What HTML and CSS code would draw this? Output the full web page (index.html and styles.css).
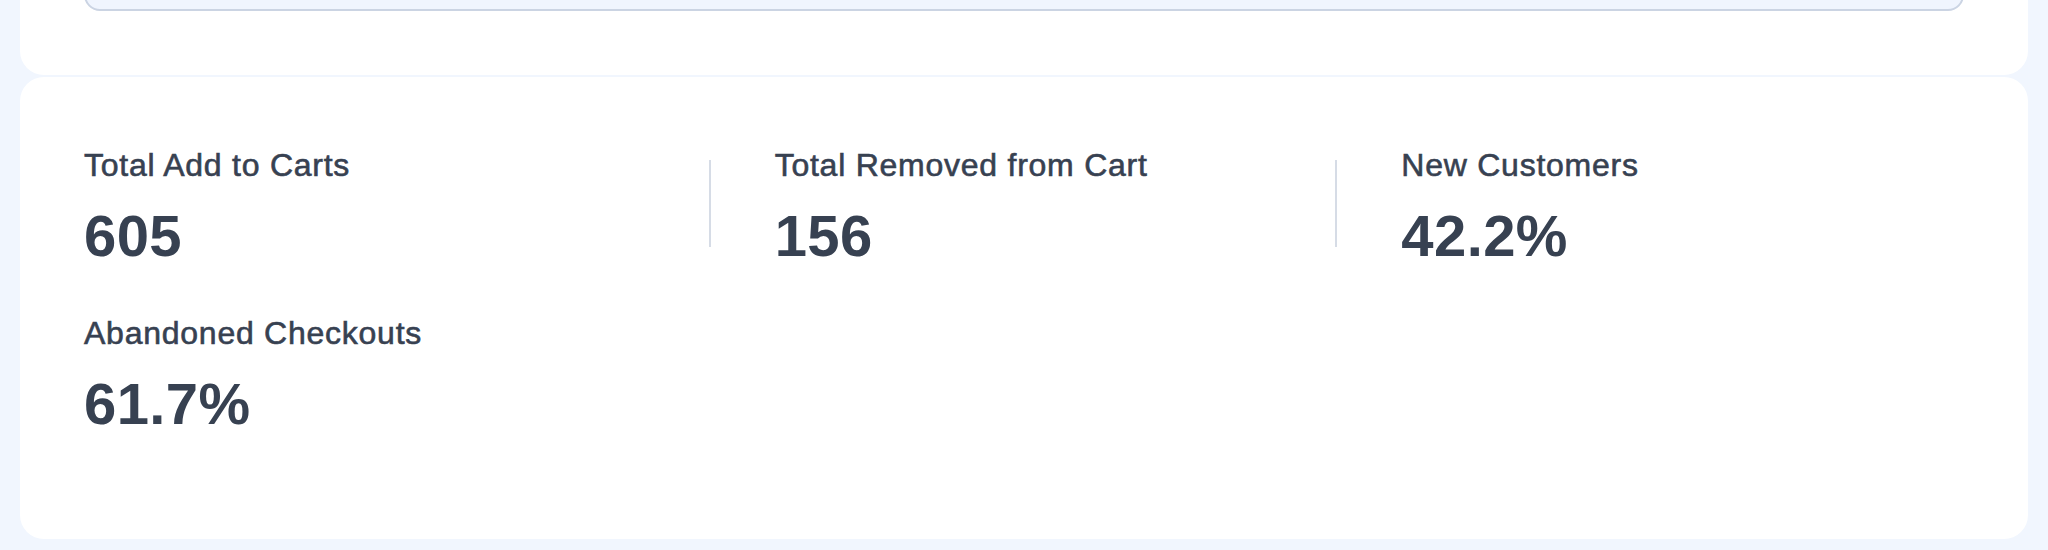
FILE: index.html
```html
<!DOCTYPE html>
<html lang="en">
<head>
  <meta charset="UTF-8" />
  <meta name="viewport" content="width=device-width, initial-scale=1.0"/>
  <title>Cart Stats</title>
  <link rel="stylesheet" href="styles.css">
</head>
<body>

  <div class="page">
    <div class="card chart-card">
      <div class="chart-box"></div>
    </div>

    <div class="card stats-card">
      <div class="stats">
        <div class="stat">
          <div class="stat-label">Total Add to Carts</div>
          <div class="stat-value">605</div>
        </div>
        <div class="stat">
          <div class="stat-label">Total Removed from Cart</div>
          <div class="stat-value">156</div>
        </div>
        <div class="stat">
          <div class="stat-label">New Customers</div>
          <div class="stat-value">42.2%</div>
        </div>
        <div class="stat">
          <div class="stat-label">Abandoned Checkouts</div>
          <div class="stat-value">61.7%</div>
        </div>
      </div>
    </div>
  </div>

</body>
</html>
```

FILE: styles.css
```css
body {
  margin: 0;
  background: #f1f6fe;
  font-family: 'Liberation Sans', Arial, sans-serif;
  color: #374151;
  overflow: hidden;
}

.page {
  padding: 0 20px;
  margin-top: -149px;
}

.card {
  background: #ffffff;
  border-radius: 24px;
}

/* chart block above, scrolled mostly out of view */
.chart-card {
  padding: 40px 64px 64px;
}

.chart-box {
  height: 116px;
  background: #f0f5fe;
  border: 2px solid #cbd4e3;
  border-radius: 16px;
}

.stats-card {
  margin-top: 2px;
  padding: 64px 64px 100px;
}

.stats {
  display: grid;
  grid-template-columns: repeat(3, 1fr);
  row-gap: 38px;
}

.stat {
  position: relative;
}

.stat:nth-child(3n+2),
.stat:nth-child(3n+3) {
  padding-left: 64px;
}

.stat:nth-child(3n+2)::before,
.stat:nth-child(3n+3)::before {
  content: "";
  position: absolute;
  left: -2px;
  top: 19px;
  bottom: 24px;
  width: 2px;
  background: #d6dce6;
}

.stat-label {
  font-size: 32px;
  line-height: 48px;
  letter-spacing: 0.75px;
  margin-bottom: 12px;
  -webkit-text-stroke: 0.6px #374151;
}

.stat-value {
  font-size: 58px;
  line-height: 70px;
  font-weight: bold;
  letter-spacing: 0.4px;
}
```
